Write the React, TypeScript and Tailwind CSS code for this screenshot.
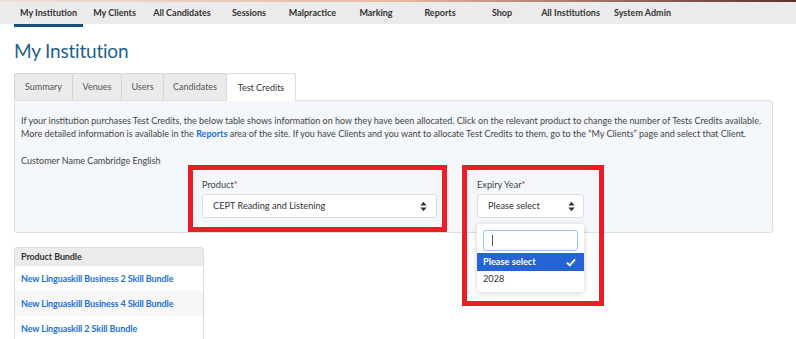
import React from 'react';

const navItems = [
  { label: 'My Institution', w: 'w-[69px]', active: true },
  { label: 'My Clients', w: 'w-[63px]' },
  { label: 'All Candidates', w: 'w-[72px]' },
  { label: 'Sessions', w: 'w-[62px]' },
  { label: 'Malpractice', w: 'w-[65px]' },
  { label: 'Marking', w: 'w-[62px]' },
  { label: 'Reports', w: 'w-[66px]' },
  { label: 'Shop', w: 'w-[58px]' },
  { label: 'All Institutions', w: 'w-[79px]' },
  { label: 'System Admin', w: 'w-[65px]' },
];

const tabs = [
  { label: 'Summary', w: 'w-[59px]' },
  { label: 'Venues', w: 'w-[50px]' },
  { label: 'Users', w: 'w-[43px]' },
  { label: 'Candidates', w: 'w-[64px]' },
  { label: 'Test Credits', w: 'w-[70px]', active: true },
];

const bundles = [
  'New Linguaskill Business 2 Skill Bundle',
  'New Linguaskill Business 4 Skill Bundle',
  'New Linguaskill 2 Skill Bundle',
];

const SortArrows = () => (
  <svg width="7" height="11" viewBox="0 0 7 11" className="text-[#333]">
    <path d="M3.5 0.8 L6.6 4.4 H0.4 Z" fill="currentColor" />
    <path d="M3.5 10.2 L6.6 6.6 H0.4 Z" fill="currentColor" />
  </svg>
);

const App: React.FC = () => {
  return (
    <div className="w-[796px] h-[339px] overflow-hidden bg-white relative font-['Lato',sans-serif] text-[#444]">
      {/* banner photo strip */}
      <div className="h-[2px] bg-gradient-to-r from-[#eadfd9] via-[#e9b9a0] to-[#5a3230]" />

      {/* Top nav */}
      <div className="h-[22px] bg-[#ebebeb] flex pl-[14px] text-[9px] font-bold text-[#333]">
        {navItems.map(item => (
          <div key={item.label} className={`${item.w} relative flex items-center justify-center whitespace-nowrap`}>
            {item.label}
            {item.active && <div className="absolute left-0 right-0 top-[22px] h-[3px] bg-[#1c4f78]" />}
          </div>
        ))}
      </div>

      <div className="px-[14px]">
        <h1 className="mt-[15px] text-[19px] leading-[24px] tracking-[-0.2px] text-[#1f5f8e]">My Institution</h1>

        {/* Tabs */}
        <div className="mt-[10px] flex h-[27px]">
          {tabs.map(t => (
            <div
              key={t.label}
              className={`${t.w} flex items-center justify-center text-[9px] border border-b-0 rounded-t-[3px] -mr-px ${
                t.active ? 'bg-white border-[#ddd] text-[#333] relative z-10 h-[28px]' : 'bg-[#ebebeb] border-[#d4d4d4] text-[#555]'
              }`}
            >
              {t.label}
            </div>
          ))}
        </div>

        {/* Panel */}
        <div className="w-[759px] h-[133px] bg-[#f4f7fb] border border-[#dcdfe3] rounded-[3px] px-[6px] pt-[13px] text-[9px] leading-[13px] text-[#444]">
          <p className="whitespace-nowrap">
            If your institution purchases Test Credits, the below table shows information on how they have been allocated. Click on the relevant product to change the number of Tests Credits available.
          </p>
          <p className="whitespace-nowrap">
            More detailed information is available in the <span className="text-[#1a6fe0] font-bold">Reports</span> area of the site. If you have Clients and you want to allocate Test Credits to them, go to the “My Clients” page and select that Client.
          </p>
          <p className="mt-[14px]">Customer Name Cambridge English</p>

          <div className="flex mt-[12px] ml-[181px] gap-[40px] leading-[12px] text-[9.2px]">
            <div className="w-[235px]">
              <div>Product<span className="text-[#d9202a]">*</span></div>
              <div className="mt-[3px] h-[24px] bg-white border border-[#ddd] rounded-[3px] flex items-center justify-between pl-[10px] pr-[9px] text-[#333]">
                <span>CEPT Reading and Listening</span>
                <SortArrows />
              </div>
            </div>
            <div className="w-[107px] relative z-10">
              <div>Expiry Year<span className="text-[#d9202a]">*</span></div>
              <div className="mt-[3px] h-[24px] bg-white border border-[#ddd] rounded-[3px] flex items-center justify-between pl-[10px] pr-[8px] text-[#333]">
                <span>Please select</span>
                <SortArrows />
              </div>
              {/* open dropdown menu */}
              <div className="absolute left-0 top-[45px] w-[107px] h-[68px] bg-white rounded-[3px] shadow-[0_1px_6px_rgba(0,0,0,0.18)] pt-[6px]">
                <div className="mx-[6px] h-[21px] bg-white border border-[#9cc3ea] rounded-[3px] flex items-center pl-[8px]">
                  <div className="w-px h-[11px] bg-[#555]" />
                </div>
                <div className="mt-[2px] h-[18px] bg-[#2563d6] text-white font-bold flex items-center justify-between pl-[6px] pr-[8px]">
                  <span>Please select</span>
                  <svg width="10" height="9" viewBox="0 0 10 9">
                    <path d="M1 4.8 L3.8 7.4 L9 1.4" fill="none" stroke="white" strokeWidth="2" />
                  </svg>
                </div>
                <div className="h-[16px] flex items-center pl-[6px] text-[#333]">2028</div>
              </div>
            </div>
          </div>
        </div>

        {/* Table */}
        <div className="mt-[14px] w-[190px] border border-[#ddd] rounded-t-[3px] text-[9px] tracking-[-0.1px]">
          <div className="h-[18px] bg-[#ebebeb] flex items-center px-[6px] font-bold text-[#333]">Product Bundle</div>
          {bundles.map((b, i) => (
            <div key={b} className={`h-[25px] flex items-center px-[6px] font-bold text-[#1a6fe0] ${i % 2 === 1 ? 'bg-[#f7f7f7]' : 'bg-white'}`}>
              {b}
            </div>
          ))}
        </div>
      </div>

      {/* red annotation boxes drawn over the screenshot */}
      <div className="absolute left-[188px] top-[165px] w-[259px] h-[67px] border-[5px] border-[#ee1c25] z-20 pointer-events-none" />
      <div className="absolute left-[462px] top-[165px] w-[142px] h-[141px] border-[5px] border-[#ee1c25] z-20 pointer-events-none" />
    </div>
  );
};

export default App;
